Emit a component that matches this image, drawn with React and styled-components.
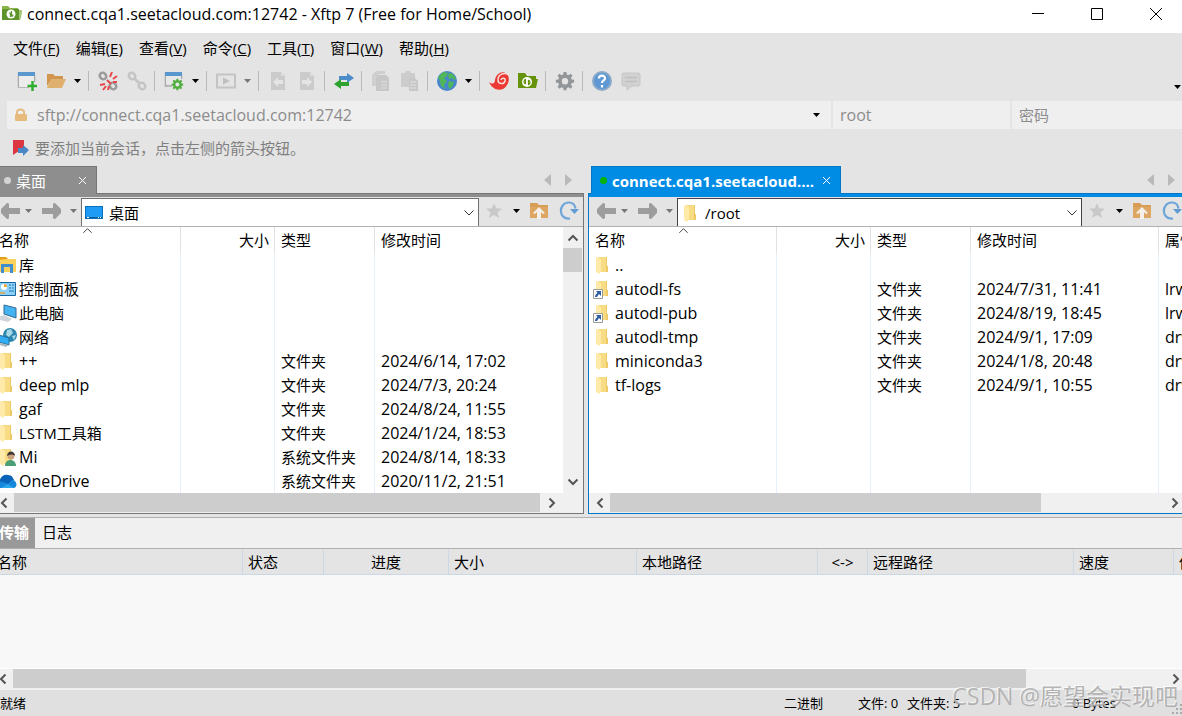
import React from 'react'
import styled, { createGlobalStyle } from 'styled-components'

const GlobalStyle = createGlobalStyle`
	* {
		box-sizing: border-box;
	}

	body {
		margin: 0;
		overflow: hidden;
		background: #e4e4e4;
		color: #000;
		font: 15px/20px 'Open Sans', 'Noto Sans CJK SC', sans-serif;
	}

	button, input, select {
		margin: 0;
		padding: 0;
		border: 0;
		background: none;
		color: inherit;
		font: inherit;
		outline: 0;
	}

	svg {
		display: block;
		flex: none;
	}
`

const Window = styled.div`
	position: relative;
	display: flex;
	flex-direction: column;
	min-height: 100vh;
	overflow: hidden;
`

const TitleBar = styled.header`
	display: flex;
	align-items: center;
	height: 33px;
	padding: 0 0 5px 2px;
	background: #fff;
`

const Title = styled.h1`
	flex: 1;
	margin: 0 0 0 5px;
	font-size: 16px;
	font-weight: 400;
	line-height: 20px;
`

const WindowButton = styled.button`
	display: flex;
	justify-content: center;
	width: 59px;

	&:last-child {
		margin-right: -3px;
	}
`

const MenuBar = styled.nav`
	display: flex;
	align-items: center;
	height: 32px;
	padding: 0 0 2px 5px;
`

const MenuItem = styled.button`
	padding: 0 8px;
	white-space: nowrap;
`

const ToolBar = styled.div`
	display: flex;
	align-items: center;
	height: 32px;
	padding-left: 12px;
`

const ToolButton = styled.button`
	display: flex;
	justify-content: center;
	width: 29px;
	opacity: ${props => (props.$off ? 0.6 : 1)};
`

const DropButton = styled.button`
	display: flex;
	justify-content: center;
	width: 15px;
	color: ${props => (props.$off ? '#777' : '#000')};
`

const Overflow = styled(DropButton)`
	align-self: flex-end;
	width: 10px;
	height: 12px;
	margin-left: auto;
`

const Separator = styled.span`
	width: 1px;
	height: 20px;
	margin: 0 4px 0 3px;
	background: #b9b9b9;
`

const AddressBar = styled.form`
	display: flex;
	gap: 2px;
	margin: 4px 0 0 7px;
	color: #8c8c8c;
`

const Field = styled.label`
	display: flex;
	flex: ${props => (props.$width ? `0 0 ${props.$width}` : '1')};
	align-items: center;
	min-width: 0;
	height: 28px;
	padding: 0 7px;
	background: #efefef;

	input {
		flex: 1;
		min-width: 0;
		font-size: 16px;
	}

	input::placeholder {
		color: #8c8c8c;
		font-size: 15px;
		opacity: 1;
	}
`

const LockBox = styled.span`
	width: 23px;
`

const Hint = styled.p`
	display: flex;
	align-items: center;
	gap: 6px;
	height: 37px;
	margin: 0;
	padding: 0 0 0 13px;
	color: #808080;
`

// the docked area runs a little past both edges of the window
const Dock = styled.main`
	display: flex;
	flex: 1;
	flex-direction: column;
	margin: 0 -5px 0 -8px;
`

const Panes = styled.div`
	display: flex;
	gap: 4px;
`

const Pane = styled.section`
	--edge: ${props => (props.$active ? '#0078c8' : '#777')};
	--fill: ${props => (props.$active ? '#008be5' : '#8e8e8e')};
	display: flex;
	flex: ${props => props.$share} 1 0;
	flex-direction: column;
	min-width: 0;
`

const TabStrip = styled.div`
	display: flex;
	align-items: center;
	height: 27px;
	padding-left: 3px;
`

const Tab = styled.div`
	display: flex;
	align-items: center;
	position: relative;
	width: ${props => props.$width};
	height: 28px;
	margin-bottom: -1px;
	padding: 0 10px 0 8px;
	border: 1px solid var(--edge);
	border-bottom: 0;
	background: var(--fill);
	color: #fff;

	strong {
		flex: 1;
		overflow: hidden;
		font-weight: ${props => (props.$bold ? 700 : 400)};
		white-space: nowrap;
	}
`

const Dot = styled.span`
	width: 7px;
	height: 7px;
	margin-right: 5px;
	border-radius: 50%;
	background: ${props => props.color};
`

const TabArrows = styled.span`
	display: flex;
	gap: 14px;
	margin-left: auto;
	padding-right: 12px;
`

const PaneBody = styled.div`
	border: 1px solid var(--edge);
	box-shadow: inset 0 3px var(--fill);
	padding-top: 3px;
`

const NavBar = styled.div`
	display: flex;
	align-items: flex-end;
	height: 30px;
	padding-left: 6px;
	border-bottom: 1px solid #b0b0b0;

	> button {
		display: flex;
		align-items: center;
		justify-content: center;
		height: 30px;
	}
`

const NavButton = styled.button`
	width: ${props => props.$width};
`

const PathBox = styled.label`
	display: flex;
	flex: 1;
	align-items: center;
	height: 28px;
	padding: 0 3px;
	border: 1px solid ${props => (props.$active ? '#444' : '#707070')};
	border-bottom: 0;
	background: #fff;

	select {
		flex: 1;
		min-width: 0;
		margin-left: 4px;
		appearance: none;
		line-height: 20px;
	}
`

const ListArea = styled.div`
	display: flex;
	background: #fff;
`

const FileTable = styled.table`
	flex: 1;
	width: 100%;
	min-width: 0;
	border-collapse: separate;
	border-spacing: 0;
	table-layout: fixed;

	th {
		position: relative;
		height: 26px;
		border-right: 1px solid #e2e2e2;
		font-weight: 400;
	}

	td {
		height: 24px;
		border-right: 1px solid #e6f0fc;
	}

	th, td {
		padding: 0 5px 0 6px;
		line-height: 20px;
		overflow: hidden;
		text-align: left;
		white-space: nowrap;
	}

	th:nth-child(2) {
		text-align: right;
	}

	th:last-child, td:last-child {
		padding-right: 0;
		border-right: 0;
	}
`

const NameCell = styled.span`
	display: flex;
	align-items: center;
	gap: 2px;
	margin-left: -2px;
`

const Words = styled.span`
	font-size: ${props => (props.$latin ? '16px' : '15px')};
`

const SortMark = styled.span`
	position: absolute;
	top: -2px;
	left: 50%;
	margin-left: -5px;
`

const Scroll = styled.div`
	display: flex;
	flex-direction: ${props => (props.$vertical ? 'column' : 'row')};
	flex: none;
	width: ${props => (props.$vertical ? '20px' : 'auto')};
	height: ${props => (props.$vertical ? 'auto' : '20px')};
	padding: ${props => (props.$vertical ? '0 1px 0 0' : '0 0 1px')};
	margin-right: ${props => (props.$corner ? '20px' : '0')};
	background: #f0f0f0;

	button {
		display: flex;
		flex: 0 0 21px;
		align-items: center;
		justify-content: center;
	}

	button:last-child {
		flex-basis: 23px;
	}
`

const Track = styled.div`
	display: flex;
	flex: 1;
	flex-direction: inherit;
`

const Thumb = styled.div`
	flex: 0 0 ${props => props.$size};
	background: #cdcdcd;
`

const ScrollRow = styled.div`
	background: #f0f0f0;
`

const LogTabs = styled.div`
	display: flex;
	height: 32px;
	margin-top: 3px;
	padding: 0 0 0 1px;
	border: solid #b0b0b0;
	border-width: 1px 0;
	background: #f0f0f0;
`

const LogTab = styled.button`
	padding: 0 ${props => (props.$on ? '6px' : '7px')} 2px;
	background: ${props => (props.$on ? '#999' : 'none')};
	color: ${props => (props.$on ? '#fff' : '#000')};
	font-weight: ${props => (props.$on ? 700 : 400)};
`

const TransferArea = styled.div`
	flex: 1;
	min-height: 120px;
	border-bottom: 1px solid #fff;
	background: #f8f8f8;
`

const TransferTable = styled.table`
	width: 100%;
	border-spacing: 0;
	table-layout: fixed;

	th {
		height: 26px;
		padding: 0 5px;
		overflow: hidden;
		border: solid #cdd8e6;
		border-width: 0 1px 1px 0;
		background: #e4e4e4;
		font-weight: 400;
		line-height: 20px;
		text-align: left;
		white-space: nowrap;
	}

	th:nth-child(3), th:nth-child(6) {
		text-align: center;
	}
`

const StatusBar = styled.footer`
	display: flex;
	align-items: center;
	height: 27px;
	border-top: 1px solid #f0f0f0;
	background: #e0e0e0;
	font-size: 13px;
	white-space: nowrap;
`

const StatusMain = styled.span`
	flex: 1;
`

const StatusItem = styled.span`
	width: ${props => props.$width};
`

const Grip = styled.span`
	align-self: flex-end;
	width: 10px;
	padding-bottom: 2px;
`

const Watermark = styled.div`
	position: absolute;
	right: 4px;
	bottom: 4px;
	color: rgba(160, 160, 160, 0.75);
	font-size: 23px;
	line-height: 32px;
	pointer-events: none;
	text-shadow: -1px -1px 0 rgba(255, 255, 255, 0.7);
	white-space: nowrap;
`

const Svg = ({ w = 20, h = 20, children, ...rest }) => (
	<svg width={w} height={h} viewBox={`0 0 ${w} ${h}`} fill='none' aria-hidden='true' {...rest}>
		{children}
	</svg>
)

const gearPath =
	'M8.6 1h2.8l.4 2.5 1.7.7 2-1.5 2 2-1.5 2 .7 1.7 2.4.4v2.8l-2.4.4-.7 1.7 1.5 2-2 2-2-1.5-1.7.7-.4 2.4H8.600l-.4-2.400-1.700-.7-2 1.500-2-2 1.500-2-.7-1.700L.9 11.600V8.800l2.400-.4.7-1.700-1.500-2 2-2 2 1.500 1.700-.7zM10 7a3.200 3.200 0 100 6.400A3.200 3.200 0 0010 7z'

const Caret = () => (
	<Svg w={7} h={4}><path d='M0 0h7L3.500 4z' fill='currentColor' /></Svg>
)

const Chevron = ({ dir = 'down', thick, w = 12 }) => {
	const turn = { down: 0, left: 90, up: 180, right: 270 }[dir]
	return (
		<svg width={w} height={w} viewBox='0 0 12 12' fill='none' aria-hidden='true'>
			<path
				d='M1.500 3.500L6 8l4.500-4.500'
				stroke={thick ? '#555' : '#333'}
				strokeWidth={thick ? 2 : 1}
				transform={`rotate(${turn} 6 6)`}
			/>
		</svg>
	)
}

const AppIcon = () => (
	<Svg>
		<path d='M0 2h6l2 2h8v3h4l-2 9H0z' fill='#8bb548' />
		<path d='M0 5h17v11H0z' fill='#5f942d' />
		<path d='M17 6h3l-1 8-2 2z' fill='#a4c878' />
		<circle cx='9' cy='10' r='4.500' fill='#fff' />
		<path d='M7 9h1.500v4M9.500 7v4.500c0 1 1.500 1 1.500-1' stroke='#5f942d' strokeWidth='1.200' />
	</Svg>
)

const NewSession = () => (
	<Svg>
		<path d='M1.500 2v14H12M17.500 4v7' stroke='#a8a8a8' strokeWidth='1.500' />
		<path d='M2 5h15v8h-5v3H2z' fill='#ececec' />
		<path d='M1 1h17v4H1z' fill='#5b97cf' />
		<path d='M15.500 10v10M10.500 15h10' stroke='#2fae2f' strokeWidth='2.500' />
	</Svg>
)

const OpenFolder = () => (
	<Svg>
		<path d='M1 3h6l2 2h8v3H6L1 15z' fill='#d0964f' />
		<path d='M5 8h15l-4 9H1z' fill='#e0b06e' />
	</Svg>
)

const Links = ({ broken }) => (
	<Svg>
		<g stroke={broken ? '#9a9a9a' : '#c4c4c4'} strokeWidth='2.500'>
			<ellipse cx='5' cy='5' rx='3' ry='3.500' transform='rotate(-45 5 5)' />
			<ellipse cx='15' cy='15' rx='3' ry='3.500' transform='rotate(-45 15 15)' />
			{!broken && <path d='M7 7l6 6' />}
		</g>
		{broken && (
			<path
				d='M12 6l2-5M15 8l4-3M15 11h4M7 13l-5 1M8 15l-3 4M11 15l-1 4M9 9l4 4'
				stroke='#e8474a'
				strokeWidth='2'
			/>
		)}
	</Svg>
)

const Properties = () => (
	<Svg>
		<path d='M1.500 2v13H8M17.500 4v4' stroke='#a8a8a8' strokeWidth='1.500' />
		<path d='M2 5h15v8H2z' fill='#e8e8e8' />
		<path d='M1 1h17v4H1z' fill='#5b97cf' />
		<path d={gearPath} fill='#4fae3d' fillRule='evenodd' transform='translate(7 7) scale(.64)' />
	</Svg>
)

const PlayIcon = () => (
	<Svg>
		<path d='M1 3.500h18v13H1z' stroke='#b0b0b0' strokeWidth='2' />
		<path d='M7 6.500v7l7-3.500z' fill='#a8a8a8' />
	</Svg>
)

const PageArrow = ({ back }) => (
	<Svg>
		<path d='M3 1h10l4 4v14H3z' fill='#bcbcbc' />
		<path d='M13 1v4h4' fill='#d8d8d8' />
		<path
			d='M5 9h5V6l5 5-5 5v-3H5z'
			fill='#e4e4e4'
			transform={back ? 'rotate(180 10 11)' : undefined}
		/>
	</Svg>
)

const TransferIcon = () => (
	<Svg>
		<path d='M5 5h8V2l7 5-7 5V9H5z' fill='#4c8cca' />
		<path d='M15 11H7V8l-7 5 7 5v-3h8z' fill='#2ea22e' />
	</Svg>
)

const CopyIcon = ({ paste }) => (
	<Svg>
		{paste ? (
			<path d='M1 2h4l1-2h4l1 2h4v5H9v9H1z' fill='#bdbdbd' />
		) : (
			<path d='M5 0h9v3H8v12H1V4z' fill='#c2c2c2' />
		)}
		<path d={paste ? 'M9 7h6l3 3v10H9z' : 'M8 4h7l3 3v13H5V7z'} fill='#b5b5b5' />
		<path d='M10 11h6M10 14h6M10 17h6' stroke='#ddd' />
	</Svg>
)

const Globe = () => (
	<Svg>
		<circle cx='10' cy='10' r='10' fill='#4886cb' />
		<path d='M1 6l5-5 5 1-1 3-3 2 3 3-3 4 1 4-4-3-1-5zM12 2l4 1 3 5-2 1-2-2-3 1-1-3zM12 10l5 1-2 5-3 2-1-5z' fill='#4fb65a' />
	</Svg>
)

const Swirl = () => (
	<Svg>
		<path d='M0 11c4 3 6 1 6-2C7 2 14-1 18 3c4 5 1 12-4 15-5 2-11 0-14-7z' fill='#ed3833' />
		<path d='M20 4c-5-3-11-1-11 5 0 4 6 5 7 1 1-3-3-4-4-1' stroke='#f4dedc' strokeWidth='1.500' />
	</Svg>
)

const XftpIcon = () => (
	<Svg>
		<path d='M0 2h7l2 3h9v3h2l-2 9H0z' fill='#65930c' />
		<circle cx='9' cy='11' r='5' fill='#fff' />
		<path d='M7.500 8v5M10.500 14V9M7.500 13c-2-1-2-3 0-5M10.500 9c2 1 2 3 0 5' stroke='#65930c' strokeWidth='1.200' />
	</Svg>
)

const Gear = () => (
	<Svg><path d={gearPath} fill='#939699' fillRule='evenodd' /></Svg>
)

const Help = () => (
	<Svg>
		<circle cx='10' cy='10' r='9' fill='#5f98d2' stroke='#8ba9c8' strokeWidth='2' />
		<path d='M6.800 7.500C7 3.500 13.500 4 13 7.500c0 2-3 2-3 4.500M10 14v2.500' stroke='#fff' strokeWidth='2.200' />
	</Svg>
)

const Chat = () => (
	<Svg>
		<path d='M2 2h16l1 1v11l-1 1h-7l-5 4v-4H2l-1-1V3z' fill='#c6c6c6' stroke='#b4b4b4' />
		<path d='M4 6.500h12M4 10.500h12' stroke='#a8a8a8' strokeWidth='1.500' />
	</Svg>
)

const Lock = () => (
	<Svg w={13} h={14}>
		<path d='M3 7V4c0-3.500 7-3.500 7 0v3' stroke='#e5bd83' strokeWidth='2' />
		<rect y='6' x='1' width='12' height='7' rx='1' fill='#e7bb7d' />
	</Svg>
)

const Flag = () => (
	<Svg w={16} h={16}>
		<path d='M0 0h11v10l-5 1-6 4z' fill='#dc3741' />
		<path d='M5 8h5V5l6 5-6 6v-3H5z' fill='#4a87c8' />
	</Svg>
)

const BigArrow = ({ back }) => (
	<Svg w={19} h={16}>
		<path
			d='M0 5h11V1l1-1h1l6 6v4l-6 6h-1l-1-1v-4H0z'
			fill='#9d9d9d'
			transform={back ? 'rotate(180 9.500 8)' : undefined}
		/>
	</Svg>
)

const Star = () => (
	<Svg w={16} h={16}>
		<path d='M8 0l2.200 5.300 5.800.4-4.400 3.700 1.400 5.600L8 12l-5 3 1.400-5.600L0 5.700l5.800-.4z' fill='#c9c9c9' />
	</Svg>
)

const UpFolder = () => (
	<Svg w={18} h={18}>
		<path d='M0 1h7l2 2h9v13H0z' fill='#d89d55' />
		<path d='M0 5h18v11H0z' fill='#dda663' />
		<path d='M9 5l6 6-2 1-2-2v7H7v-7l-2 2-2-1z' fill='#f5f1ea' />
	</Svg>
)

const Refresh = () => (
	<Svg>
		<path d='M11 17.500C-1 19-1 1.500 10 1.500c4 0 6 3 6.500 6' stroke='#6ea6da' strokeWidth='2.200' />
		<path d='M11 8h9l-4.500 5z' fill='#5f9bd5' />
	</Svg>
)

const TabArrow = ({ back }) => (
	<Svg w={7} h={12}>
		<path d={back ? 'M7 0v12L0 6z' : 'M0 0v12l7-6z'} fill='#b9b9b9' />
	</Svg>
)

const Cross = ({ size = 7 }) => (
	<svg width={size} height={size} viewBox='0 0 12 12' aria-hidden='true'>
		<path d='M0 0l12 12M12 0L0 12' stroke='currentColor' strokeWidth={12 / size} />
	</svg>
)

const Folder = () => (
	<>
		<path d='M5 2h9v9h1v6H5z' fill='#f8dc83' />
		<path d='M13 2h1v9h1v6h-2z' fill='#efc968' />
		<path d='M3 2l5 2v12l-2 3-3-2z' fill='#ffeaa9' />
	</>
)

const FileIcon = ({ kind }) => (
	<Svg>
		{['folder', 'link', 'user'].includes(kind) && <Folder />}
		{kind === 'desktop' && (
			<>
				<rect x='.5' y='3.500' width='17' height='12' fill='#1e9bf4' stroke='#0870bd' />
				<path d='M1 14.500h16' stroke='#0a5d9c' />
				<path d='M2 14.500h2M13 14.500h1M15 14.500h1' stroke='#fff' />
			</>
		)}
		{kind === 'link' && (
			<>
				<path d='M.5 10.500h9v9h-9z' fill='#fff' stroke='#999' />
				<path d='M3 12h5v5l-2-2-2 3H2c0-2 1-3 2.500-4z' fill='#2d5c9f' />
			</>
		)}
		{kind === 'user' && (
			<>
				<path d='M8 19c0-8 11-8 11 0z' fill='#4a9f76' />
				<circle cx='14' cy='9' r='3.500' fill='#caa27f' />
				<path d='M10 9c0-6 8-6 8 0-2-2-5-2-8 0z' fill='#3f3833' />
			</>
		)}
		{kind === 'library' && (
			<>
				<path d='M1 2h8l2 2v3H1z' fill='#e6a117' />
				<path d='M1 5l9-1h9v13H1z' fill='#fbd15d' />
				<path d='M4 9h12v9h-3v-6H7v6H4z' fill='#3e8ed0' />
			</>
		)}
		{kind === 'panel' && (
			<>
				<path d='M.5 3.500h18v13H.5z' fill='#8fd0f7' stroke='#1768a2' />
				<circle cx='7' cy='8' r='3' fill='#fff' />
				<path d='M7 8V5a3 3 0 013 3z' fill='#f2a22e' />
				<path d='M12 6h2M15 6h2M12 9h2M15 9h2M12 12h5' stroke='#1879bc' />
				<path d='M3 14h5' stroke='#e9a63c' strokeWidth='1.500' />
			</>
		)}
		{kind === 'computer' && (
			<>
				<path d='M7 2l12 3v10L7 11z' fill='#43b4f1' stroke='#336b91' />
				<path d='M1 14l6-2 8 4-4 3-8-2z' fill='#cfd5da' />
			</>
		)}
		{kind === 'network' && (
			<>
				<circle cx='13' cy='8' r='7' fill='#2c86ad' />
				<path d='M10 3l4-1 2 4-4 4-3-2zM15 9l4-1-2 5z' fill='#a8d7e5' />
				<path d='M2 8l10 3v7L2 15z' fill='#31aef4' stroke='#2b729e' />
				<path d='M3 16l8 2-2 2-6-2z' fill='#aab4bb' />
			</>
		)}
		{kind === 'cloud' && (
			<>
				<path d='M2 11C4 5 7 3 11 4c4 0 5 3 6 5l-6 7H3z' fill='#0a63b8' />
				<path d='M0 17c-1-5 3-7 6-6l5 2 4-4c5 0 6 7 2 8z' fill='#1688db' />
				<path d='M4 17l7-4 6 4z' fill='#2ba8ec' />
			</>
		)}
	</Svg>
)

const localFiles = [
	{ icon: 'library', name: '库' },
	{ icon: 'panel', name: '控制面板' },
	{ icon: 'computer', name: '此电脑' },
	{ icon: 'network', name: '网络' },
	{ icon: 'folder', name: '++', type: '文件夹', time: '2024/6/14, 17:02' },
	{ icon: 'folder', name: 'deep mlp', type: '文件夹', time: '2024/7/3, 20:24' },
	{ icon: 'folder', name: 'gaf', type: '文件夹', time: '2024/8/24, 11:55' },
	{ icon: 'folder', name: 'LSTM工具箱', type: '文件夹', time: '2024/1/24, 18:53' },
	{ icon: 'user', name: 'Mi', type: '系统文件夹', time: '2024/8/14, 18:33' },
	{ icon: 'cloud', name: 'OneDrive', type: '系统文件夹', time: '2020/11/2, 21:51' },
]

const remoteFiles = [
	{ icon: 'folder', name: '..' },
	{ icon: 'link', name: 'autodl-fs', type: '文件夹', time: '2024/7/31, 11:41', attr: 'lrw' },
	{ icon: 'link', name: 'autodl-pub', type: '文件夹', time: '2024/8/19, 18:45', attr: 'lrw' },
	{ icon: 'folder', name: 'autodl-tmp', type: '文件夹', time: '2024/9/1, 17:09', attr: 'drw' },
	{ icon: 'folder', name: 'miniconda3', type: '文件夹', time: '2024/1/8, 20:48', attr: 'drw' },
	{ icon: 'folder', name: 'tf-logs', type: '文件夹', time: '2024/9/1, 10:55', attr: 'drw' },
]

const menus = [
	['文件', 'F'],
	['编辑', 'E'],
	['查看', 'V'],
	['命令', 'C'],
	['工具', 'T'],
	['窗口', 'W'],
	['帮助', 'H'],
]

const tools = [
	{ label: '新建', icon: <NewSession /> },
	{ label: '打开', icon: <OpenFolder />, drop: true },
	null,
	{ label: '断开', icon: <Links broken /> },
	{ label: '重新连接', icon: <Links /> },
	null,
	{ label: '属性', icon: <Properties />, drop: true },
	null,
	{ label: '运行', icon: <PlayIcon />, drop: true, off: true },
	null,
	{ label: '传输到左侧', icon: <PageArrow back />, off: true },
	{ label: '传输到右侧', icon: <PageArrow />, off: true },
	null,
	{ label: '同步', icon: <TransferIcon /> },
	null,
	{ label: '复制', icon: <CopyIcon />, off: true },
	{ label: '粘贴', icon: <CopyIcon paste />, off: true },
	null,
	{ label: '编码', icon: <Globe />, drop: true },
	null,
	{ label: 'Xshell', icon: <Swirl /> },
	{ label: 'Xftp', icon: <XftpIcon /> },
	null,
	{ label: '选项', icon: <Gear /> },
	null,
	{ label: '帮助', icon: <Help /> },
	{ label: '反馈', icon: <Chat />, off: true },
]

const transferColumns = [
	['名称', 251],
	['状态', 81],
	['进度', 125],
	['大小', 188],
	['本地路径', 181],
	['<->', 50],
	['远程路径', 206],
	['速度', 100],
	['估计时间'],
]

// chinese glyphs look larger than latin ones at the same size
const isLatin = text => !/[\u4e00-\u9fff]/.test(text)

const Label = ({ children }) => <Words $latin={isLatin(children)}>{children}</Words>

const ScrollBar = ({ vertical, corner, size }) => (
	<Scroll $vertical={vertical} $corner={corner}>
		<button type='button' aria-label={vertical ? '向上' : '向左'}>
			<Chevron dir={vertical ? 'up' : 'left'} thick />
		</button>
		<Track><Thumb $size={size} /></Track>
		<button type='button' aria-label={vertical ? '向下' : '向右'}>
			<Chevron dir={vertical ? 'down' : 'right'} thick />
		</button>
	</Scroll>
)

const FileList = ({ files, remote }) => {
	const blanks = Array.from({ length: 10 - files.length }, () => ({}))
	return (
		<FileTable>
			<colgroup>
				<col width='188' />
				<col width='94' />
				<col width='100' />
				<col width={remote ? '188' : undefined} />
				{remote && <col />}
			</colgroup>
			<thead>
				<tr>
					<th>名称<SortMark><Chevron dir='up' w={11} /></SortMark></th>
					<th>大小</th>
					<th>类型</th>
					<th>修改时间</th>
					{remote && <th>属性</th>}
				</tr>
			</thead>
			<tbody>
				{[...files, ...blanks].map((file, i) => (
					<tr key={i}>
						<td>
							{file.name && (
								<NameCell><FileIcon kind={file.icon} /><Label>{file.name}</Label></NameCell>
							)}
						</td>
						<td />
						<td>{file.type}</td>
						<td>{file.time && <Label>{file.time}</Label>}</td>
						{remote && <td>{file.attr && <Label>{file.attr}</Label>}</td>}
					</tr>
				))}
			</tbody>
		</FileTable>
	)
}

const FilePane = ({ remote, share, tab, tabWidth, path, icon, files, thumb }) => (
	<Pane $active={remote} $share={share}>
		<TabStrip>
			<Tab $width={tabWidth} $bold={remote}>
				<Dot color={remote ? '#06b306' : '#d4d4d4'} />
				<strong>{tab}</strong>
				<button type='button' aria-label='关闭标签'><Cross /></button>
			</Tab>
			<TabArrows><TabArrow back /><TabArrow /></TabArrows>
		</TabStrip>
		<PaneBody>
			<NavBar>
				<NavButton $width='22px' aria-label='后退'><BigArrow back /></NavButton>
				<DropButton $off aria-label='后退历史'><Caret /></DropButton>
				<NavButton $width='30px' aria-label='前进'><BigArrow /></NavButton>
				<DropButton $off aria-label='前进历史'><Caret /></DropButton>
				<PathBox $active={remote}>
					<FileIcon kind={icon} />
					<select aria-label='路径'><option>{path}</option></select>
					<Chevron />
				</PathBox>
				<NavButton $width='30px' aria-label='书签'><Star /></NavButton>
				<DropButton aria-label='书签列表'><Caret /></DropButton>
				<NavButton $width='30px' aria-label='上一级'><UpFolder /></NavButton>
				<NavButton $width='29px' aria-label='刷新'><Refresh /></NavButton>
			</NavBar>
			<ListArea>
				<FileList files={files} remote={remote} />
				{!remote && <ScrollBar vertical size='24px' />}
			</ListArea>
			<ScrollRow><ScrollBar corner={!remote} size={thumb} /></ScrollRow>
		</PaneBody>
	</Pane>
)

const App = () => (
	<>
		<GlobalStyle />
		<Window>
			<TitleBar>
				<AppIcon />
				<Title>connect.cqa1.seetacloud.com:12742 - Xftp 7 (Free for Home/School)</Title>
				<WindowButton aria-label='最小化'>
					<Svg w={12} h={12}><path d='M0 5.500h12' stroke='#000' /></Svg>
				</WindowButton>
				<WindowButton aria-label='最大化'>
					<Svg w={12} h={12}><path d='M.5.5h11v11H.5z' stroke='#000' /></Svg>
				</WindowButton>
				<WindowButton aria-label='关闭'><Cross size={12} /></WindowButton>
			</TitleBar>
			<MenuBar>
				{menus.map(([label, key]) => (
					<MenuItem key={key}>{label}(<u>{key}</u>)</MenuItem>
				))}
			</MenuBar>
			<ToolBar>
				{tools.map((tool, i) =>
					tool ? (
						<React.Fragment key={i}>
							<ToolButton $off={tool.off} aria-label={tool.label}>{tool.icon}</ToolButton>
							{tool.drop && (
								<DropButton $off={tool.off} aria-label={`${tool.label}菜单`}><Caret /></DropButton>
							)}
						</React.Fragment>
					) : (
						<Separator key={i} />
					)
				)}
				<Overflow aria-label='更多'><Caret /></Overflow>
			</ToolBar>
			<AddressBar>
				<Field>
					<LockBox><Lock /></LockBox>
					<input aria-label='地址' defaultValue='sftp://connect.cqa1.seetacloud.com:12742' />
					<DropButton type='button' aria-label='地址列表'><Caret /></DropButton>
				</Field>
				<Field $width='177px'><input aria-label='用户名' defaultValue='root' /></Field>
				<Field $width='170px'>
					<input type='password' aria-label='密码' placeholder='密码' autoComplete='off' />
				</Field>
			</AddressBar>
			<Hint><Flag />要添加当前会话，点击左侧的箭头按钮。</Hint>
			<Dock>
				<Panes>
					<FilePane
						share={592}
						tab='桌面'
						tabWidth='102px'
						path='桌面'
						icon='desktop'
						files={localFiles}
						thumb='100%'
					/>
					<FilePane
						remote
						share={599}
						tab='connect.cqa1.seetacloud....'
						tabWidth='250px'
						path='/root'
						icon='folder'
						files={remoteFiles}
						thumb='78%'
					/>
				</Panes>
				<LogTabs>
					<LogTab $on>传输</LogTab>
					<LogTab>日志</LogTab>
				</LogTabs>
				<TransferArea>
					<TransferTable>
						<colgroup>
							{transferColumns.map(([name, width]) => <col key={name} width={width} />)}
						</colgroup>
						<thead>
							<tr>{transferColumns.map(([name]) => <th key={name}>{name}</th>)}</tr>
						</thead>
					</TransferTable>
				</TransferArea>
				<ScrollBar size='88%' />
			</Dock>
			<StatusBar>
				<StatusMain>就绪</StatusMain>
				<StatusItem $width='74px'>二进制</StatusItem>
				<StatusItem $width='49px'>文件: 0</StatusItem>
				<StatusItem $width='165px'>文件夹: 5</StatusItem>
				<StatusItem $width='100px'>0 Bytes</StatusItem>
				<Grip>
					<Svg w={10} h={10}>
						<path d='M8 1h2M4 5h2M8 5h2M0 9h2M4 9h2M8 9h2' stroke='#aaa' strokeWidth='2' />
					</Svg>
				</Grip>
			</StatusBar>
			<Watermark>CSDN @愿望会实现吧</Watermark>
		</Window>
	</>
)

export default App
